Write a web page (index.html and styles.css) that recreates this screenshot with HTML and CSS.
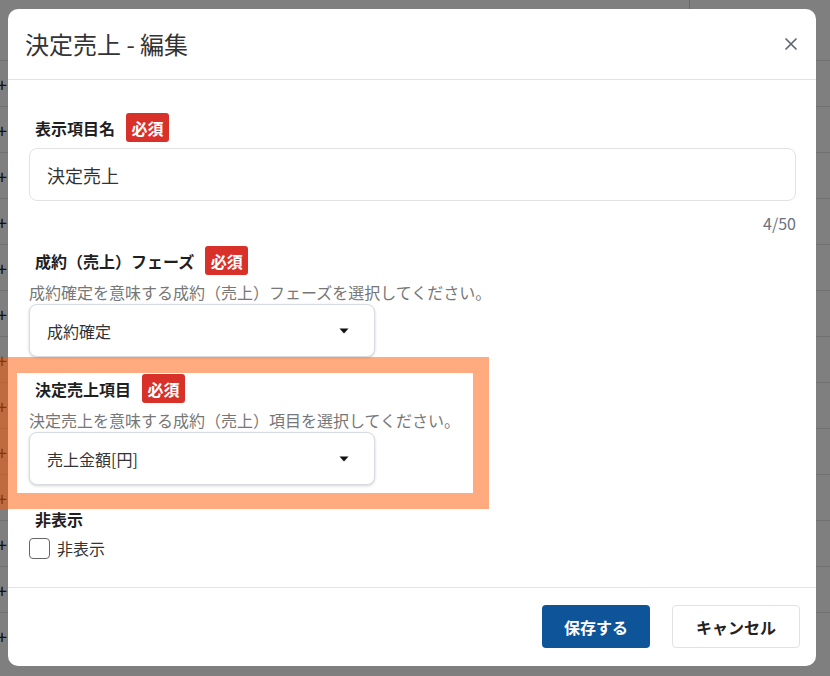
FILE: index.html
```html
<!DOCTYPE html>
<html lang="ja">
<head>
<meta charset="utf-8">
<title>決定売上 - 編集</title>
<link rel="stylesheet" href="styles.css">
</head>
<body>
<div class="page">
  <div class="page-top"><span class="page-col"></span></div>
  <div class="page-rows">
    <div class="page-row"><span class="mark">+</span></div>
    <div class="page-row"><span class="mark">+</span></div>
    <div class="page-row"><span class="mark">+</span></div>
    <div class="page-row"><span class="mark">+</span></div>
    <div class="page-row"><span class="mark">+</span></div>
    <div class="page-row"><span class="mark">+</span></div>
    <div class="page-row"><span class="mark">+</span></div>
    <div class="page-row"><span class="mark">+</span></div>
    <div class="page-row"><span class="mark">+</span></div>
    <div class="page-row"><span class="mark">+</span></div>
    <div class="page-row"><span class="mark">+</span></div>
    <div class="page-row"><span class="mark">+</span></div>
    <div class="page-row"><span class="mark">+</span></div>
  </div>
</div>

<div class="backdrop">
  <div class="modal">
    <div class="modal-header">
      <h1 class="modal-title">決定売上 - 編集</h1>
      <button class="close-btn" aria-label="閉じる">
        <svg width="12" height="12" viewBox="0 0 12 12"><path d="M1 1L11 11M11 1L1 11" stroke="#5f6673" stroke-width="1.7" stroke-linecap="round"/></svg>
      </button>
    </div>

    <div class="modal-body">
      <div class="field-label first">
        <span class="label-text">表示項目名</span><span class="badge">必須</span>
      </div>
      <div class="text-input">決定売上</div>
      <div class="counter">4/50</div>

      <div class="field-label second">
        <span class="label-text">成約（売上）フェーズ</span><span class="badge">必須</span>
      </div>
      <div class="field-desc">成約確定を意味する成約（売上）フェーズを選択してください。</div>
      <div class="select">
        <span class="select-value">成約確定</span>
        <svg class="caret" width="10" height="6" viewBox="0 0 10 6"><path d="M0.5 0.5H9.5L5 5.5Z" fill="#111"/></svg>
      </div>

      <div class="field-label third">
        <span class="label-text">決定売上項目</span><span class="badge">必須</span>
      </div>
      <div class="field-desc">決定売上を意味する成約（売上）項目を選択してください。</div>
      <div class="select">
        <span class="select-value">売上金額[円]</span>
        <svg class="caret" width="10" height="6" viewBox="0 0 10 6"><path d="M0.5 0.5H9.5L5 5.5Z" fill="#111"/></svg>
      </div>

      <div class="field-label fourth">
        <span class="label-text">非表示</span>
      </div>
      <label class="check-row">
        <span class="checkbox"></span>
        <span class="check-text">非表示</span>
      </label>
    </div>

    <div class="modal-footer">
      <button class="btn btn-primary">保存する</button>
      <button class="btn btn-secondary">キャンセル</button>
    </div>
  </div>
</div>

<div class="highlight"></div>
</body>
</html>
```

FILE: styles.css
```css
* { box-sizing: border-box; }

html, body {
  margin: 0;
  padding: 0;
  width: 830px;
  height: 676px;
  overflow: hidden;
  font-family: "Noto Sans CJK JP", "Noto Sans", sans-serif;
}

body {
  background: #ffffff;
  position: relative;
}

/* underlying page (seen through the backdrop) */
.page {
  width: 830px;
  height: 676px;
}
.page-top {
  height: 60px;
}
.page-col {
  display: block;
  margin-left: 689px;
  width: 1px;
  height: 60px;
  background: #d0d0d0;
}
.page-row {
  height: 46px;
  border-top: 1px solid #e2e2e2;
  display: flex;
  align-items: center;
}
.mark {
  margin-left: -3px;
  font-size: 18px;
  line-height: 1;
  color: #222;
}

/* backdrop + modal */
.backdrop {
  position: absolute;
  inset: 0;
  background: rgba(0, 0, 0, 0.5);
  display: flex;
  padding: 9px 14px 10px 8px;
}

.modal {
  flex: 1;
  background: #ffffff;
  border-radius: 10px;
  display: flex;
  flex-direction: column;
  overflow: hidden;
}

.modal-header {
  height: 71px;
  border-bottom: 1px solid #e3e3e3;
  display: flex;
  align-items: center;
  justify-content: space-between;
  padding: 0 19px 1px 17px;
}
.modal-title {
  margin: 0;
  font-size: 24px;
  font-weight: 400;
  color: #333333;
  line-height: 32px;
}
.close-btn {
  border: none;
  background: none;
  padding: 0;
  width: 12px;
  height: 12px;
  display: flex;
}

.modal-body {
  flex: 1;
  display: flex;
  flex-direction: column;
  align-items: flex-start;
  padding: 0 20px 0 21px;
}

.field-label {
  display: flex;
  align-items: center;
  gap: 11px;
  height: 29px;
  padding-left: 6px;
}
.field-label.first { margin-top: 33px; }
.field-label.second { margin-top: 11px; }
.field-label.third { margin-top: 17px; }
.field-label.fourth { margin-top: 22px; height: 24px; }

.label-text {
  font-size: 16px;
  font-weight: 700;
  color: #1f1f1f;
  line-height: 24px;
}

.badge {
  display: inline-flex;
  align-items: center;
  height: 29px;
  padding: 0 5.5px;
  background: #d8312a;
  color: #ffffff;
  font-size: 16px;
  font-weight: 700;
  border-radius: 3px;
  line-height: 1;
}

.text-input {
  align-self: stretch;
  margin-top: 6px;
  height: 53px;
  border: 1px solid #e2e2e2;
  border-radius: 8px;
  padding: 0 17px;
  display: flex;
  align-items: center;
  font-size: 18px;
  color: #333333;
}

.counter {
  align-self: stretch;
  text-align: right;
  margin-top: 10px;
  font-size: 16px;
  line-height: 24px;
  color: #6b7280;
}

.field-desc {
  margin-top: 5px;
  font-size: 16px;
  line-height: 24px;
  color: #777777;
  white-space: nowrap;
}

.select {
  width: 346px;
  height: 53px;
  border: 1px solid #d8dce2;
  border-radius: 8px;
  box-shadow: 0 1px 3px rgba(0, 0, 0, 0.18);
  display: flex;
  align-items: center;
  justify-content: space-between;
  padding: 0 25px 0 17px;
  background: #ffffff;
}
.select-value {
  font-size: 16px;
  color: #333333;
}

.check-row {
  margin-top: 5px;
  display: flex;
  align-items: center;
  gap: 7px;
  height: 24px;
}
.checkbox {
  width: 21px;
  height: 21px;
  border: 1.5px solid #666666;
  border-radius: 4px;
  background: #ffffff;
}
.check-text {
  font-size: 16px;
  color: #333333;
}

.modal-footer {
  border-top: 1px solid #e3e3e3;
  display: flex;
  justify-content: flex-end;
  gap: 22px;
  padding: 17px 16px 18px;
}

.btn {
  height: 43px;
  border-radius: 4px;
  font-family: "Noto Sans CJK JP", "Noto Sans", sans-serif;
  font-size: 16px;
  font-weight: 700;
  line-height: 1;
  cursor: pointer;
}
.btn-primary {
  background: #0e5499;
  color: #ffffff;
  border: none;
  padding: 0 22px;
}
.btn-secondary {
  background: #ffffff;
  color: #222222;
  border: 1px solid #e2e2e2;
  padding: 0 23px;
}

/* annotation highlight over the page */
.highlight {
  position: absolute;
  left: 0;
  top: 357px;
  width: 489px;
  height: 152px;
  border-style: solid;
  border-color: rgba(255, 88, 0, 0.5);
  border-width: 16px 16px 16px 17px;
  pointer-events: none;
}
```
